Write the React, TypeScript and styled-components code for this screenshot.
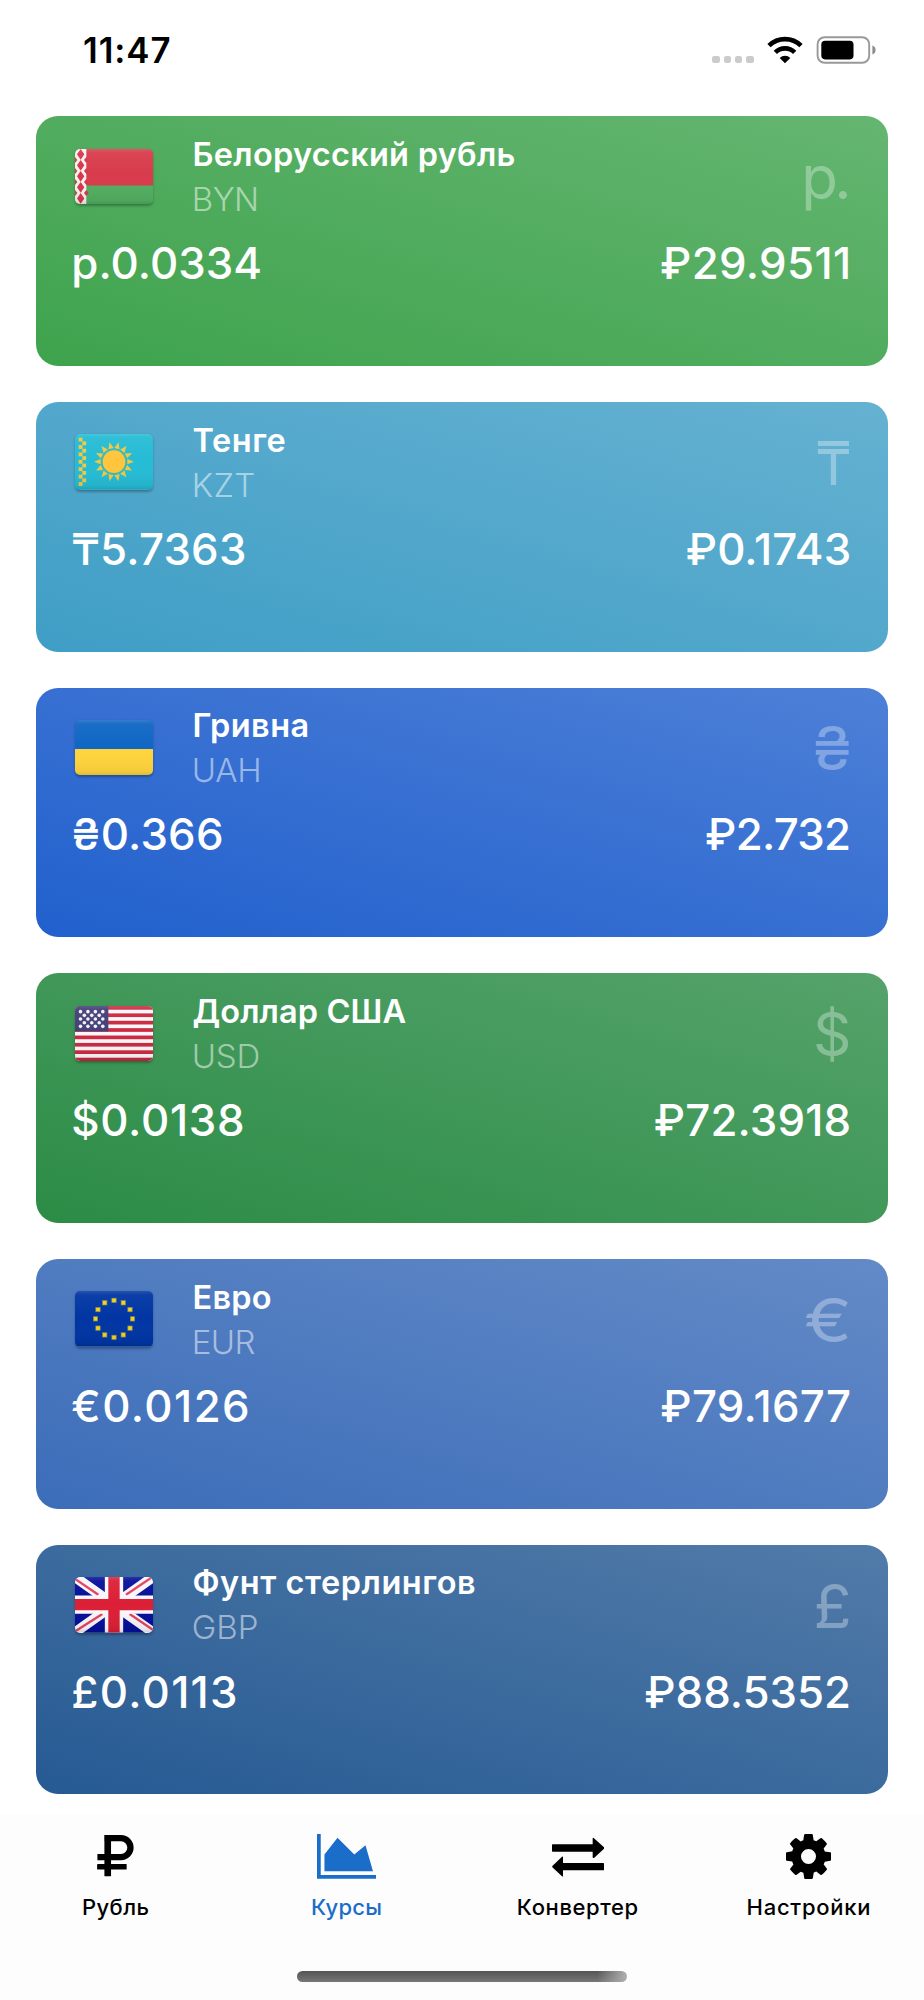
import React from "react";
import styled, { createGlobalStyle } from "styled-components";

const GlobalStyle = createGlobalStyle`
  * { box-sizing: border-box; }
  body {
    margin: 0;
    background: #fff;
    font-family: Inter, "Liberation Sans", sans-serif;
  }
`;

const Screen = styled.div`
  display: flex;
  flex-direction: column;
  width: 924px;
  height: 2000px;
  overflow: hidden;
  background: #fff;
`;

const StatusBar = styled.header`
  display: flex;
  justify-content: space-between;
  align-items: center;
  flex: none;
  height: 100.2px;
  padding: 0.6px 48px 0 83px;
`;

const Clock = styled.time`
  font-size: 34.8px;
  line-height: 42px;
  font-weight: 600;
  letter-spacing: 0.95px;
  color: #000;
`;

const StatusIcons = styled.div`
  display: flex;
  align-items: center;
  height: 28px;
`;

const SignalDots = styled.div`
  display: flex;
  gap: 3.6px;
  align-self: flex-end;
  margin: 0 13.5px 1px 0;
`;

const Dot = styled.span`
  width: 7.6px;
  height: 7.2px;
  border-radius: 2.2px;
  background: #cbcbcb;
`;

const BatterySlot = styled.span`
  display: flex;
  margin-left: 13px;
`;

const CardList = styled.main`
  display: flex;
  flex-direction: column;
  gap: 36px;
  flex: none;
  padding: 16px 36px 20.3px;
`;

const Card = styled.article<{ $rgb: string }>`
  display: flex;
  flex-direction: column;
  flex: none;
  height: 249.7px;
  padding: 15.7px 36px 0;
  border-radius: 22px;
  background: linear-gradient(to top right, rgb(${(p) => p.$rgb}), rgba(${(p) => p.$rgb}, 0.8));
  color: #fff;
`;

const CardHead = styled.div`
  display: flex;
  height: 106.2px;
`;

const FlagFrame = styled.span`
  display: block;
  flex: none;
  width: 78px;
  height: 55.4px;
  margin: 16.8px 39.5px 0 3px;
  border-radius: 5px;
  overflow: hidden;
  box-shadow: 0 1.5px 2.5px rgba(0, 0, 0, 0.28);

  svg {
    display: block;
    width: 100%;
    height: 100%;
  }
`;

const Names = styled.div`
  flex: 1;
`;

const Title = styled.h2<{ $ls: number }>`
  margin: 0;
  font-size: 32.5px;
  line-height: 45px;
  font-weight: 600;
  letter-spacing: ${(p) => p.$ls}px;
  white-space: nowrap;
`;

const Code = styled.div<{ $ls: number }>`
  font-size: 33px;
  line-height: 44.5px;
  font-weight: 330;
  letter-spacing: ${(p) => p.$ls - 0.3}px;
  margin-left: -0.8px;
  color: rgba(255, 255, 255, 0.52);
`;

const Sign = styled.div<{ $ls?: number; $stretch?: number }>`
  margin-top: 9.2px;
  margin-right: ${(p) => 0.5 - (p.$ls ?? 0)}px;
  font-size: 60px;
  line-height: 72px;
  letter-spacing: ${(p) => p.$ls ?? 0}px;
  transform: scaleX(${(p) => p.$stretch ?? 1});
  transform-origin: right;
  color: rgba(255, 255, 255, 0.32);
`;

const Amounts = styled.div`
  display: flex;
  justify-content: space-between;
`;

const Amount = styled.div<{ $ls: number }>`
  margin-left: -0.7px;
  margin-right: ${(p) => 0.9 - p.$ls}px;
  font-size: 43.8px;
  line-height: 52px;
  font-weight: 470;
  letter-spacing: ${(p) => p.$ls}px;
  white-space: nowrap;
`;

const TabBar = styled.nav`
  display: grid;
  grid-template-columns: repeat(4, 231px);
  flex: none;
  height: 156px;
  padding-top: 19px;
  background: #fdfdfd;
`;

const Tab = styled.a<{ $active?: boolean }>`
  display: flex;
  flex-direction: column;
  align-items: center;
  color: ${(p) => (p.$active ? "#1a6dc8" : "#000")};
`;

const TabIcon = styled.span`
  display: flex;
  align-items: center;
  height: 46px;
`;

const TabLabel = styled.span<{ $ls: number }>`
  margin-top: 13.5px;
  margin-right: ${(p) => -p.$ls}px;
  font-size: 22px;
  line-height: 28px;
  font-weight: 450;
  letter-spacing: ${(p) => p.$ls}px;
`;

const HomeArea = styled.footer`
  display: flex;
  flex: 1;
  justify-content: center;
  background: #fdfdfd;
`;

const HomeIndicator = styled.div`
  width: 330px;
  height: 11px;
  border-radius: 5.5px;
  background:
    linear-gradient(to right, rgba(176, 176, 176, 0) 91%, #b0b0b0 100%),
    linear-gradient(#555, #777);
`;

const WifiIcon = () => (
  <svg width="36" height="28" viewBox="0 0 108 84">
    <g fill="none" stroke="#000" strokeWidth="14">
      <path d="M6 29 A68 68 0 0 1 102 29" />
      <path d="M25 49 A41 41 0 0 1 83 49" />
    </g>
    <path d="M54 82 L38 66 A23 23 0 0 1 70 66 Z" fill="#000" />
  </svg>
);

const BatteryIcon = () => (
  <svg width="60" height="28" viewBox="0 0 60 28">
    <rect x="1.6" y="1.2" width="51.6" height="25.6" rx="7" fill="none" stroke="#999" strokeWidth="1.9" />
    <rect x="5.3" y="4.8" width="32.2" height="18.6" rx="3.8" fill="#000" />
    <path d="M56.4 9.6 Q59.6 10.8 59.6 14 Q59.6 17.2 56.4 18.4 Z" fill="#8c8c8c" />
  </svg>
);

const RubleIcon = () => (
  <svg width="37.4" height="43.2" viewBox="0 0 112 130">
    <g fill="currentColor">
      <rect x="22" y="0" width="20" height="124" rx="1.5" />
      <rect x="0" y="87" width="89" height="17" rx="1.5" />
    </g>
    <path
      d="M1 66.5 H72 A28.5 28.5 0 0 0 72 9.5 H23"
      fill="none"
      stroke="currentColor"
      strokeWidth="19"
      strokeLinejoin="round"
    />
  </svg>
);

const ChartIcon = () => (
  <svg width="59.7" height="44.8" viewBox="0 0 2048 1536">
    <path
      fill="currentColor"
      d="M2048 1408v128h-2048v-1536h128v1408h1920zM1664 384l256 896h-1664v-576l448-576 576 576z"
    />
  </svg>
);

const ExchangeIcon = () => (
  <svg width="52" height="43" viewBox="0 -8 156 129">
    <g fill="currentColor">
      <path d="M2 20 H122 V2 Q122 0 124 0 L125 1 L156 29 Q157 31 156 33 L126 61 Q122 62 122 59 V42 H2 Q0 42 0 40 V22 Q0 20 2 20 Z" />
      <path d="M154 76 H33 V58 Q32 55 30 57 L1 85 Q0 87 1 89 L30 116 Q33 118 33 115 V98 H154 Q156 98 156 96 V78 Q156 76 154 76 Z" />
    </g>
  </svg>
);

const GearIcon = () => (
  <svg width="45" height="45" viewBox="128 128 1536 1536">
    <path
      fill="currentColor"
      d="M1152 896q0-106-75-181t-181-75-181 75-75 181 75 181 181 75 181-75 75-181zm512-109v222q0 12-8 23t-20 13l-185 28q-19 54-39 91 35 50 107 138 10 12 10 25t-9 23q-27 37-99 108t-94 71q-12 0-26-9l-138-108q-44 23-91 38-16 136-29 186-7 28-36 28h-222q-14 0-24.500-8.500t-11.500-21.500l-28-184q-49-16-90-37l-141 107q-10 9-25 9-14 0-25-11-126-114-165-168-7-10-7-23 0-12 8-23 15-21 51-66.500t54-70.500q-27-50-41-99l-183-27q-13-2-21-12.500t-8-23.500v-222q0-12 8-23t19-13l186-28q14-46 39-92-40-57-107-138-10-12-10-24 0-10 9-23 26-36 98.500-107.500t94.500-71.500q13 0 26 10l138 107q44-23 91-38 16-136 29-186 7-28 36-28h222q14 0 24.500 8.500t11.500 21.500l28 184q49 16 90 37l142-107q9-9 24-9 13 0 25 10 129 119 165 170 7 8 7 22 0 12-8 23-15 21-51 66.500t-54 70.500q26 50 41 98l183 28q13 2 21 12.500t8 23.500z"
    />
  </svg>
);

type Country = "by" | "kz" | "ua" | "us" | "eu" | "gb";

const range = (n: number) => Array.from({ length: n }, (_, i) => i);

const diamond = (x: number, y: number, w: number, h: number) =>
  `M${x} ${y - h} L${x + w} ${y} L${x} ${y + h} L${x - w} ${y} Z`;

const FlagBelarus = () => (
  <>
    <rect width="234" height="110" fill="#d83b4b" />
    <rect y="110" width="234" height="56" fill="#52ae61" />
    <rect width="34" height="166" fill="#f5f1f0" />
    {[16, 49, 82, 115, 148].map((y) => (
      <path key={y} d={diamond(17, y, 11, 16)} fill="#d93648" />
    ))}
    {[33, 66, 99, 132].map((y) => (
      <path key={y} d={diamond(0, y, 7, 9) + diamond(34, y, 7, 9)} fill="#d93648" />
    ))}
  </>
);

const FlagKazakhstan = () => (
  <>
    <rect width="234" height="166" fill="#25bcd5" />
    {range(13).map((i) => (
      <rect key={i} x={i % 2 ? 22 : 11} y={11 + i * 11.1} width="11.5" height="11.5" fill="#f4c83f" />
    ))}
    {range(14).map((i) => (
      <path key={i} d="M177 83 L157 75 L157 91 Z" fill="#f4c83f" transform={`rotate(${(i * 360) / 14} 117 83)`} />
    ))}
    <circle cx="117" cy="83" r="36" fill="#ffc63c" stroke="#3fb9b4" strokeWidth="4" />
  </>
);

const FlagUkraine = () => (
  <>
    <rect width="234" height="87" fill="#0f66c4" />
    <rect y="87" width="234" height="79" fill="#ffd43c" />
  </>
);

const FlagUsa = () => (
  <>
    <rect width="234" height="166" fill="#f8f6f8" />
    {range(8).map((i) => (
      <rect key={i} y={i * 22.13} width="234" height="11.07" fill="#cb2940" />
    ))}
    <rect width="100" height="76" fill="#433f78" />
    {range(5).map((row) =>
      range(row % 2 ? 3 : 4).map((col) => (
        <circle
          key={`${row}-${col}`}
          cx={(row % 2 ? 28 : 16.5) + col * 22.3}
          cy={17 + row * 11}
          r="5.4"
          fill="#f2f1f7"
        />
      ))
    )}
  </>
);

const FlagEurope = () => (
  <>
    <rect width="234" height="166" fill="#0035a3" />
    {range(12).map((i) => {
      const a = (i * Math.PI) / 6;
      return (
        <rect
          key={i}
          x={117 + 55.5 * Math.cos(a) - 6.5}
          y={83.5 + 55.5 * Math.sin(a) - 6.5}
          width="13"
          height="13"
          fill="#f5cf22"
          stroke="#7f8a55"
          strokeWidth="2"
        />
      );
    })}
  </>
);

const FlagBritain = () => (
  <>
    <rect width="234" height="166" fill="#050f9a" />
    <path d="M0 0 L234 166 M234 0 L0 166" stroke="#f7f5fa" strokeWidth="30" />
    <g stroke="#e5405a" strokeWidth="7">
      <path d="M-2 4 L70 53" />
      <path d="M153 53 L232 0" />
      <path d="M2 162 L82 111" />
      <path d="M164 111 L238 161" />
    </g>
    <path d="M117 0 V166 M0 83 H234" stroke="#f9f7fa" strokeWidth="55" />
    <path d="M117 0 V166 M0 83 H234" stroke="#dc1f36" strokeWidth="34" />
  </>
);

const flagArt: Record<Country, () => React.JSX.Element> = {
  by: FlagBelarus,
  kz: FlagKazakhstan,
  ua: FlagUkraine,
  us: FlagUsa,
  eu: FlagEurope,
  gb: FlagBritain,
};

const Flag = ({ country }: { country: Country }) => {
  const Art = flagArt[country];
  const gloss = `gloss-${country}`;
  return (
    <FlagFrame>
      <svg viewBox="0 0 234 166" preserveAspectRatio="none">
        <defs>
          <linearGradient id={gloss} x1="0" y1="0" x2="0" y2="1">
            <stop offset="0" stopColor="#fff" stopOpacity="0.15" />
            <stop offset="0.07" stopColor="#fff" stopOpacity="0.05" />
            <stop offset="0.5" stopColor="#fff" stopOpacity="0" />
            <stop offset="0.93" stopColor="#000" stopOpacity="0.05" />
            <stop offset="1" stopColor="#000" stopOpacity="0.14" />
          </linearGradient>
        </defs>
        <Art />
        <rect width="234" height="166" fill={`url(#${gloss})`} />
      </svg>
    </FlagFrame>
  );
};

interface Currency {
  country: Country;
  rgb: string;
  name: string;
  nameLs: number;
  code: string;
  codeLs: number;
  sign: string;
  signLs?: number;
  signStretch?: number;
  direct: string;
  directLs: number;
  inverse: string;
  inverseLs: number;
}

const currencies: Currency[] = [
  {
    country: "by", rgb: "62, 163, 77", name: "Белорусский рубль", nameLs: 0.28, code: "BYN", codeLs: -0.2,
    sign: "р.", signLs: -3.8, direct: "р.0.0334", directLs: 0.05, inverse: "₽29.9511", inverseLs: 0.35,
  },
  {
    country: "kz", rgb: "63, 158, 198", name: "Тенге", nameLs: 0.55, code: "KZT", codeLs: 0.7,
    sign: "₸", signStretch: 0.94, direct: "₸5.7363", directLs: 0.2, inverse: "₽0.1743", inverseLs: 0.12,
  },
  {
    country: "ua", rgb: "33, 96, 205", name: "Гривна", nameLs: 0.45, code: "UAH", codeLs: 0.1,
    sign: "₴", signStretch: 1.04, direct: "₴0.366", directLs: 0.2, inverse: "₽2.732", inverseLs: -0.7,
  },
  {
    country: "us", rgb: "43, 140, 70", name: "Доллар США", nameLs: 0.1, code: "USD", codeLs: 0.1,
    sign: "$", direct: "$0.0138", directLs: 0.7, inverse: "₽72.3918", inverseLs: 0.15,
  },
  {
    country: "eu", rgb: "60, 109, 185", name: "Евро", nameLs: 0.2, code: "EUR", codeLs: -0.31,
    sign: "€", signStretch: 1.2, direct: "€0.0126", directLs: 1.45, inverse: "₽79.1677", inverseLs: 0.35,
  },
  {
    country: "gb", rgb: "38, 90, 147", name: "Фунт стерлингов", nameLs: 0.54, code: "GBP", codeLs: 0.3,
    sign: "£", signStretch: 1.04, direct: "£0.0113", directLs: 1.3, inverse: "₽88.5352", inverseLs: 0,
  },
];

const tabs = [
  { label: "Рубль", ls: 0.4, Icon: RubleIcon },
  { label: "Курсы", ls: 0.3, Icon: ChartIcon, active: true },
  { label: "Конвертер", ls: 0.6, Icon: ExchangeIcon },
  { label: "Настройки", ls: 0.72, Icon: GearIcon },
];

export default function App() {
  return (
    <Screen>
      <GlobalStyle />
      <StatusBar>
        <Clock>11:47</Clock>
        <StatusIcons>
          <SignalDots>
            {range(4).map((i) => (
              <Dot key={i} />
            ))}
          </SignalDots>
          <WifiIcon />
          <BatterySlot>
            <BatteryIcon />
          </BatterySlot>
        </StatusIcons>
      </StatusBar>
      <CardList>
        {currencies.map((c) => (
          <Card key={c.code} $rgb={c.rgb}>
            <CardHead>
              <Flag country={c.country} />
              <Names>
                <Title $ls={c.nameLs}>{c.name}</Title>
                <Code $ls={c.codeLs}>{c.code}</Code>
              </Names>
              <Sign $ls={c.signLs} $stretch={c.signStretch}>{c.sign}</Sign>
            </CardHead>
            <Amounts>
              <Amount $ls={c.directLs}>{c.direct}</Amount>
              <Amount $ls={c.inverseLs}>{c.inverse}</Amount>
            </Amounts>
          </Card>
        ))}
      </CardList>
      <TabBar>
        {tabs.map(({ label, ls, Icon, active }) => (
          <Tab key={label} $active={active}>
            <TabIcon>
              <Icon />
            </TabIcon>
            <TabLabel $ls={ls}>{label}</TabLabel>
          </Tab>
        ))}
      </TabBar>
      <HomeArea>
        <HomeIndicator />
      </HomeArea>
    </Screen>
  );
}
